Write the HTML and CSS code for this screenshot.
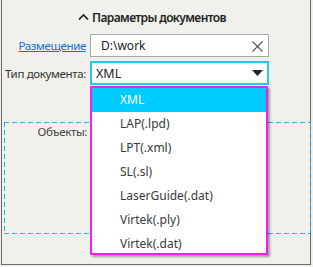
FILE: index.html
```html
<!DOCTYPE html>
<html lang="ru">

<head>
    <meta charset="utf-8">
    <title>Параметры документов</title>
    <link rel="stylesheet" href="styles.css">
</head>

<body>

    <div class="panel">
        <div class="section-head">
            <svg class="caret" width="11" height="8" viewBox="0 0 11 8">
                <path d="M1 6.5 L5.5 2 L10 6.5" fill="none" stroke="#1a1a1a" stroke-width="1.6"/>
            </svg>
            <span>Параметры документов</span>
        </div>

        <div class="form">
            <div class="label"><a href="#" class="link">Размещение</a></div>
            <div class="field input">
                <span>D:\work</span>
                <svg class="clear" width="11" height="11" viewBox="0 0 11 11">
                    <path d="M0.5 0.5 L10.5 10.5 M10.5 0.5 L0.5 10.5" stroke="#555" stroke-width="1.1"/>
                </svg>
            </div>

            <div class="label">Тип документа:</div>
            <div class="field select">
                <span>XML</span>
                <svg class="arrow" width="11" height="6" viewBox="0 0 11 6">
                    <path d="M0 0 L11 0 L5.5 6 Z" fill="#222"/>
                </svg>

                <ul class="dropdown">
                    <li class="valgt">XML</li>
                    <li>LAP(.lpd)</li>
                    <li>LPT(.xml)</li>
                    <li>SL(.sl)</li>
                    <li>LaserGuide(.dat)</li>
                    <li>Virtek(.ply)</li>
                    <li>Virtek(.dat)</li>
                </ul>
            </div>
        </div>

        <div class="objects">
            <div class="objects-label">Объекты:</div>
        </div>
    </div>

</body>

</html>
```

FILE: styles.css
```css
body {
    margin: 0;
    background-color: #f0f0ec;
    font-family: "Noto Sans", "Open Sans", sans-serif;
    font-size: 12px;
    color: #222;
}

.panel {
    margin-left: 1px;
    width: 308px;
    height: 264px;
    border: 1px solid #6a6a6a;
    border-top: none;
    background-color: #f0f0ec;
}

.section-head {
    display: flex;
    align-items: center;
    justify-content: center;
    gap: 3px;
    height: 34px;
    padding-right: 8px;
    font-weight: 600;
    letter-spacing: -0.6px;
    color: #222;
}

.caret {
    margin-top: -1px;
}

.form {
    display: grid;
    grid-template-columns: 88px 179px;
    row-gap: 4px;
    align-items: center;
}

.label {
    text-align: right;
    padding-right: 4px;
    font-size: 11.5px;
    letter-spacing: -0.35px;
    color: #333;
    white-space: nowrap;
}

.link {
    color: #1170d8;
    text-decoration: underline;
}

.field {
    position: relative;
    box-sizing: border-box;
    height: 23px;
    display: flex;
    align-items: center;
    justify-content: space-between;
    background-color: white;
}

.input {
    border: 1px solid #a8a8a8;
    padding: 0 5px 0 10px;
}

.select {
    height: 24px;
    border: 2px solid #22c8f2;
    padding: 0 4px 0 4px;
}

.select span {
    font-size: 12.5px;
}

.clear {
    margin-top: 1px;
}

.dropdown {
    position: absolute;
    top: 23px;
    left: -2px;
    width: 174px;
    height: 165px;
    overflow: hidden;
    margin: 0;
    padding: 0;
    list-style: none;
    background-color: white;
    border: 2px solid #f020f0;
    box-shadow: 2px 2px 2px rgba(0, 0, 0, 0.35);
    z-index: 2;
}

.dropdown li {
    height: 24px;
    line-height: 23px;
    padding-left: 28px;
    font-size: 12px;
    color: #3a3a3a;
}

.dropdown .valgt {
    background-color: #00ccff;
    color: white;
}

/* stiplet ramme tegnet med gradienter, laengere streger end border: dashed */
.objects {
    margin: 37px 0 0 2px;
    width: 307px;
    height: 112px;
    box-sizing: border-box;
    padding-top: 2px;
    background-image:
        repeating-linear-gradient(90deg, #22b4e8 0 5px, transparent 5px 8px),
        repeating-linear-gradient(90deg, #22b4e8 0 5px, transparent 5px 8px),
        repeating-linear-gradient(180deg, #22b4e8 0 5px, transparent 5px 8px),
        repeating-linear-gradient(180deg, #22b4e8 0 5px, transparent 5px 8px);
    background-size: 100% 1px, 100% 1px, 1px 100%, 1px 100%;
    background-position: top left, bottom left, top left, top right;
    background-repeat: no-repeat;
}

.objects-label {
    width: 83px;
    text-align: right;
    font-size: 11.5px;
    letter-spacing: -0.35px;
    color: #444;
}
```
